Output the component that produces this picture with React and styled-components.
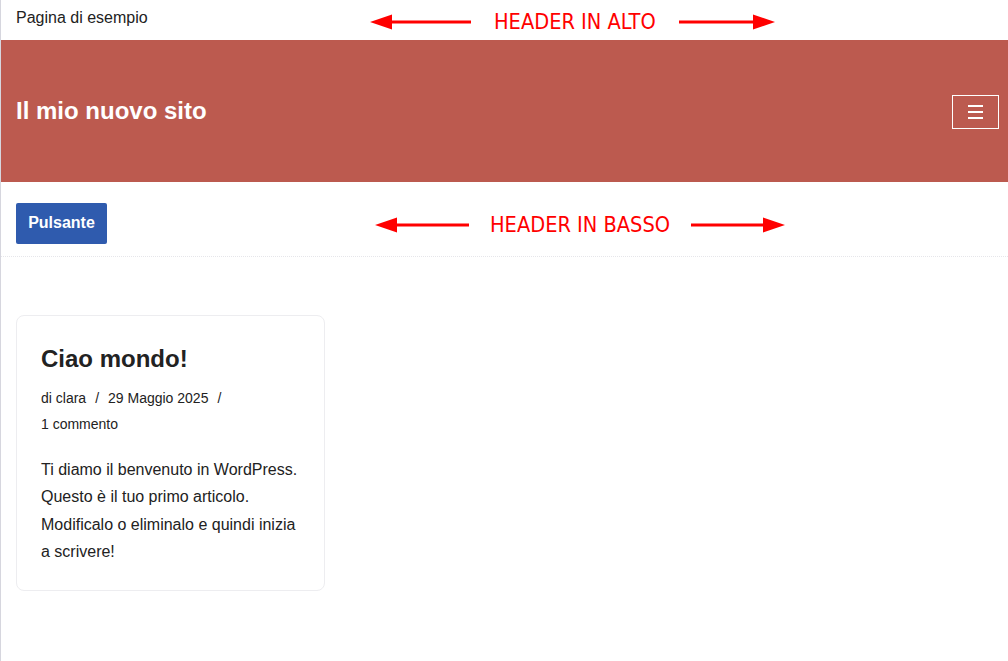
import React from "react";
import styled, { createGlobalStyle } from "styled-components";

const Global = createGlobalStyle`
  html, body { margin: 0; padding: 0; background: #fff; }
  body {
    font-family: "Liberation Sans", Arial, sans-serif;
    color: #222;
    border-left: 1px solid #d6d6de;
    min-height: 661px;
    box-sizing: border-box;
  }
  * { box-sizing: border-box; }
`;

const TopBar = styled.div`
  height: 40px;
  display: flex;
  align-items: center;
  padding: 0 0 4px 15px;
  position: relative;
  font-size: 16px;
  color: #222;
`;

const MainBar = styled.div`
  height: 142px;
  background: #bc5a4f;
  display: flex;
  align-items: center;
  justify-content: space-between;
  padding: 0 9px 0 15px;
`;

const SiteTitle = styled.div`
  color: #fff;
  font-weight: 700;
  font-size: 24px;
  margin-top: -1px;
`;

const MenuButton = styled.button`
  width: 47px;
  height: 34px;
  border: 1px solid #fff;
  background: transparent;
  display: flex;
  flex-direction: column;
  align-items: center;
  justify-content: center;
  gap: 4px;
  padding: 0;
  margin-top: 1px;
`;

const MenuLine = styled.span`
  display: block;
  width: 15px;
  height: 2px;
  background: #fff;
`;

const BottomBar = styled.div`
  height: 75px;
  display: flex;
  align-items: center;
  padding: 8px 0 0 15px;
  border-bottom: 1px dotted #e6e6ea;
  position: relative;
`;

const Button = styled.a`
  display: inline-flex;
  align-items: center;
  justify-content: center;
  width: 91px;
  height: 41px;
  background: #2f5bae;
  color: #fff;
  font-weight: 700;
  font-size: 16px;
  border-radius: 2px;
  text-decoration: none;
`;

const Annotation = styled.div`
  position: absolute;
  top: ${(p) => p.$top}px;
  left: ${(p) => p.$left}px;
  display: flex;
  align-items: center;
  color: #ff0000;
  font-family: "DejaVu Sans Condensed", "DejaVu Sans", sans-serif;
  font-stretch: condensed;
  font-size: 21.6px;
  line-height: 1;
  white-space: nowrap;
`;

const Arrow = ({ dir, len }) => (
  <svg width={len} height="16" viewBox={`0 0 ${len} 16`}>
    {dir === "left" ? (
      <>
        <polygon points={`0,8 22,0.5 22,15.5`} fill="#ff0000" />
        <rect x="18" y="6.5" width={len - 18} height="3" fill="#ff0000" />
      </>
    ) : (
      <>
        <rect x="0" y="6.5" width={len - 18} height="3" fill="#ff0000" />
        <polygon points={`${len},8 ${len - 22},0.5 ${len - 22},15.5`} fill="#ff0000" />
      </>
    )}
  </svg>
);

const ArrowText = styled.span`
  margin: 0 ${(p) => p.$gap}px;
`;

const Main = styled.main`
  padding: 58px 0 0 15px;
`;

const Card = styled.article`
  width: 309px;
  border: 1px solid #ededf0;
  border-radius: 8px;
  padding: 23px 24px 24px 24px;
`;

const CardTitle = styled.h2`
  margin: 0;
  font-size: 24px;
  font-weight: 700;
  line-height: 40px;
  color: #222;
`;

const Meta = styled.div`
  font-size: 14px;
  line-height: 26px;
  margin-top: 6px;
  color: #222;
`;

const MetaItem = styled.span`
  white-space: nowrap;
`;

const Sep = styled.span`
  margin: 0 9px;
`;

const Body = styled.p`
  margin: 19px 0 0;
  font-size: 16px;
  line-height: 27.4px;
  color: #222;
`;

export default function App() {
  return (
    <>
      <Global />
      <header>
        <TopBar>
          Pagina di esempio
          <Annotation $top={11} $left={369}>
            <Arrow dir="left" len={101} />
            <ArrowText $gap={23}>HEADER IN ALTO</ArrowText>
            <Arrow dir="right" len={96} />
          </Annotation>
        </TopBar>
        <MainBar>
          <SiteTitle>Il mio nuovo sito</SiteTitle>
          <MenuButton aria-label="menu">
            <MenuLine />
            <MenuLine />
            <MenuLine />
          </MenuButton>
        </MainBar>
        <BottomBar>
          <Button href="#">Pulsante</Button>
          <Annotation $top={32} $left={374}>
            <Arrow dir="left" len={94} />
            <ArrowText $gap={21}>HEADER IN BASSO</ArrowText>
            <Arrow dir="right" len={94} />
          </Annotation>
        </BottomBar>
      </header>
      <Main>
        <Card>
          <CardTitle>Ciao mondo!</CardTitle>
          <Meta>
            <MetaItem>di clara</MetaItem>
            <Sep>/</Sep>
            <MetaItem>29 Maggio 2025</MetaItem>
            <Sep>/</Sep> <MetaItem>1 commento</MetaItem>
          </Meta>
          <Body>
            Ti diamo il benvenuto in WordPress. Questo è il tuo primo articolo.
            Modificalo o eliminalo e quindi inizia a scrivere!
          </Body>
        </Card>
      </Main>
    </>
  );
}
